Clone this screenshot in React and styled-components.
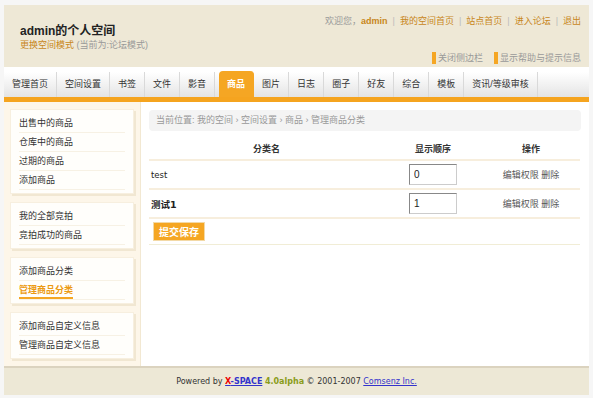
import styled, { createGlobalStyle } from "styled-components";

const GlobalStyle = createGlobalStyle`
  html, body {
    margin: 0;
    padding: 0;
    background: #f6f6f6;
  }
  body {
    font-family: "Liberation Sans", "Noto Sans CJK SC", sans-serif;
    font-size: 9px;
    color: #333;
  }
`;

const tabs = ["管理首页", "空间设置", "书签", "文件", "影音", "商品", "图片", "日志", "圈子", "好友", "综合", "模板", "资讯/等级审核"];

const menus = [
  ["出售中的商品", "仓库中的商品", "过期的商品", "添加商品"],
  ["我的全部竞拍", "竞拍成功的商品"],
  ["添加商品分类", "管理商品分类"],
  ["添加商品自定义信息", "管理商品自定义信息"],
];

const rows = [
  { name: "test", order: "0" },
  { name: "测试1", order: "1", bold: true },
];

const App = () => {
  return (
    <>
      <GlobalStyle />
      <Page>
        <Header>
          <TitleBox>
            <Title>admin的个人空间</Title>
            <Sub>
              <a>更换空间模式</a> <span>(当前为:论坛模式)</span>
            </Sub>
          </TitleBox>
          <UserBox>
            <TopLinks>
              欢迎您，<b>admin</b>
              <Sep>|</Sep>
              <a>我的空间首页</a>
              <Sep>|</Sep>
              <a>站点首页</a>
              <Sep>|</Sep>
              <a>进入论坛</a>
              <Sep>|</Sep>
              <a>退出</a>
            </TopLinks>
            <Toggles>
              <Toggle>关闭侧边栏</Toggle>
              <Toggle>显示帮助与提示信息</Toggle>
            </Toggles>
          </UserBox>
        </Header>

        <Nav>
          {tabs.map((t) => (
            <Tab key={t} $active={t === "商品"}>
              {t}
            </Tab>
          ))}
        </Nav>
        <OrangeBar />

        <Body>
          <Sidebar>
            {menus.map((group, i) => (
              <Panel key={i}>
                {group.map((m) => (
                  <MenuItem key={m}>
                    {m === "管理商品分类" ? <Current>{m}</Current> : m}
                  </MenuItem>
                ))}
              </Panel>
            ))}
          </Sidebar>

          <Main>
            <Crumb>当前位置: 我的空间 › 空间设置 › 商品 › 管理商品分类</Crumb>
            <Table>
              <colgroup>
                <col style={{ width: 235 }} />
                <col style={{ width: 98 }} />
                <col style={{ width: 98 }} />
              </colgroup>
              <thead>
                <tr>
                  <Th>分类名</Th>
                  <Th>显示顺序</Th>
                  <Th>操作</Th>
                </tr>
              </thead>
              <tbody>
                {rows.map((r) => (
                  <tr key={r.name}>
                    <NameCell $bold={r.bold}>{r.name}</NameCell>
                    <Td>
                      <OrderInput defaultValue={r.order} />
                    </Td>
                    <Td>编辑权限 删除</Td>
                  </tr>
                ))}
                <tr>
                  <ButtonCell colSpan={3}>
                    <SaveButton>提交保存</SaveButton>
                  </ButtonCell>
                </tr>
              </tbody>
            </Table>
          </Main>
        </Body>

        <Footer>
          Powered by{" "}
          <Brand>
            <span>X</span>-SPACE
          </Brand>{" "}
          <Version>4.0alpha</Version> © 2001-2007 <FootLink>Comsenz Inc.</FootLink>
        </Footer>
      </Page>
    </>
  );
};
export default App;

const Page = styled.div`
  width: 585px;
  margin: 5px 0 0 4px;
  background: #fff;
`;

const Header = styled.div`
  height: 62px;
  background: #eee8d6;
  display: flex;
  justify-content: space-between;
  padding: 0 8px 0 16px;
`;

const TitleBox = styled.div`
  padding-top: 19px;
`;

const Title = styled.div`
  font-size: 12px;
  line-height: 14px;
  font-weight: bold;
  color: #222;
`;

const Sub = styled.div`
  margin-top: 1px;
  line-height: 12px;
  a {
    color: #c8861a;
  }
  span {
    color: #999;
  }
`;

const UserBox = styled.div`
  display: flex;
  flex-direction: column;
  align-items: flex-end;
  justify-content: space-between;
  padding: 10px 0 3px;
  line-height: 12px;
`;

const TopLinks = styled.div`
  color: #999;
  b {
    color: #c8861a;
  }
  a {
    color: #c8861a;
  }
`;

const Sep = styled.span`
  color: #bbb;
  margin: 0 5px;
`;

const Toggles = styled.div`
  display: flex;
  gap: 11px;
`;

const Toggle = styled.span`
  color: #999;
  border-left: 4px solid #f5a623;
  padding-left: 2px;
  line-height: 12px;
`;

const Nav = styled.div`
  height: 30px;
  display: flex;
  align-items: flex-end;
  background: linear-gradient(to bottom, #fff 0, #fff 5px, #fcfcfc 8px, #e4e4e4 100%);
`;

const Tab = styled.div`
  height: 25px;
  line-height: 25px;
  padding: 0 8px;
  white-space: nowrap;
  color: ${(p) => (p.$active ? "#fff" : "#333")};
  font-weight: ${(p) => (p.$active ? "bold" : "normal")};
  background: ${(p) => (p.$active ? "#f5a623" : "transparent")};
  border-right: 1px solid ${(p) => (p.$active ? "#f5a623" : "#d9d9d9")};
  border-radius: ${(p) => (p.$active ? "4px 4px 0 0" : "0")};
  margin-left: ${(p) => (p.$active ? "4px" : "0")};
  ${(p) => p.$active && "height: 26px; line-height: 26px;"}
`;

const OrangeBar = styled.div`
  height: 5px;
  background: #f5a41f;
`;

const Body = styled.div`
  display: flex;
  height: 264px;
`;

const Sidebar = styled.div`
  width: 137px;
  box-sizing: border-box;
  background: #fdf6e9;
  border-right: 1px solid #f2e8d2;
  padding: 7px 6px 0 6px;
  display: flex;
  flex-direction: column;
  gap: 8px;
`;

const Panel = styled.div`
  background: #fffefb;
  border: 1px solid #f7efdf;
  box-shadow: 2px 2px 0 #f1e7d2;
  padding: 4px 8px 3px;
`;

const MenuItem = styled.div`
  height: 18px;
  line-height: 18px;
  border-bottom: 1px solid #f7f1e4;
  color: #333;
  white-space: nowrap;
`;

const Current = styled.span`
  color: #ec9a12;
  font-weight: bold;
  border-bottom: 2px solid #f5a623;
  padding-bottom: 2px;
`;

const Main = styled.div`
  flex: 1;
  padding: 8px 8px 0 8px;
`;

const Crumb = styled.div`
  height: 21px;
  line-height: 21px;
  background: #f4f4f4;
  border-radius: 4px;
  padding-left: 7px;
  color: #999;
`;

const Table = styled.table`
  width: 431px;
  margin-top: 6px;
  border-collapse: collapse;
  table-layout: fixed;
`;

const Th = styled.th`
  height: 22px;
  font-weight: bold;
  color: #333;
  text-align: center;
  border-bottom: 2px solid #f7eedd;
  padding: 0;
`;

const Td = styled.td`
  height: 27px;
  text-align: center;
  color: #555;
  border-bottom: 2px solid #f7eedd;
  padding: 0;
`;

const NameCell = styled(Td)`
  text-align: left;
  padding-left: 2px;
  font-family: "DejaVu Sans", "Noto Sans CJK SC", sans-serif;
  font-size: ${(p) => (p.$bold ? "9.5px" : "8.5px")};
  font-weight: ${(p) => (p.$bold ? "bold" : "normal")};
  color: #222;
`;

const OrderInput = styled.input`
  width: 48px;
  height: 21px;
  box-sizing: border-box;
  border: 1px solid;
  border-color: #888 #ccc #ccc #888;
  padding: 0 4px;
  font-family: "Liberation Sans", sans-serif;
  font-size: 10px;
  color: #222;
  vertical-align: middle;
`;

const ButtonCell = styled.td`
  height: 25px;
  padding: 0 0 0 4px;
  border-bottom: 1px solid #f1edd6;
`;

const SaveButton = styled.button`
  width: 52px;
  height: 19px;
  padding: 0;
  background: #f5a623;
  border: 1px solid #f3d9a6;
  color: #fff;
  font-weight: bold;
  font-family: "Noto Sans CJK SC", sans-serif;
  font-size: 10px;
  line-height: 17px;
  vertical-align: middle;
`;

const Footer = styled.div`
  height: 27px;
  line-height: 27px;
  background: #ede8d6;
  border-top: 2px solid #dbd3bf;
  text-align: center;
  font-family: "DejaVu Sans", sans-serif;
  font-size: 8px;
  color: #333;
`;

const Brand = styled.a`
  color: #3333cc;
  font-weight: bold;
  text-decoration: underline;
  span {
    color: #e00;
  }
`;

const Version = styled.b`
  color: #8a9c1a;
`;

const FootLink = styled.a`
  color: #3333cc;
  text-decoration: underline;
`;
